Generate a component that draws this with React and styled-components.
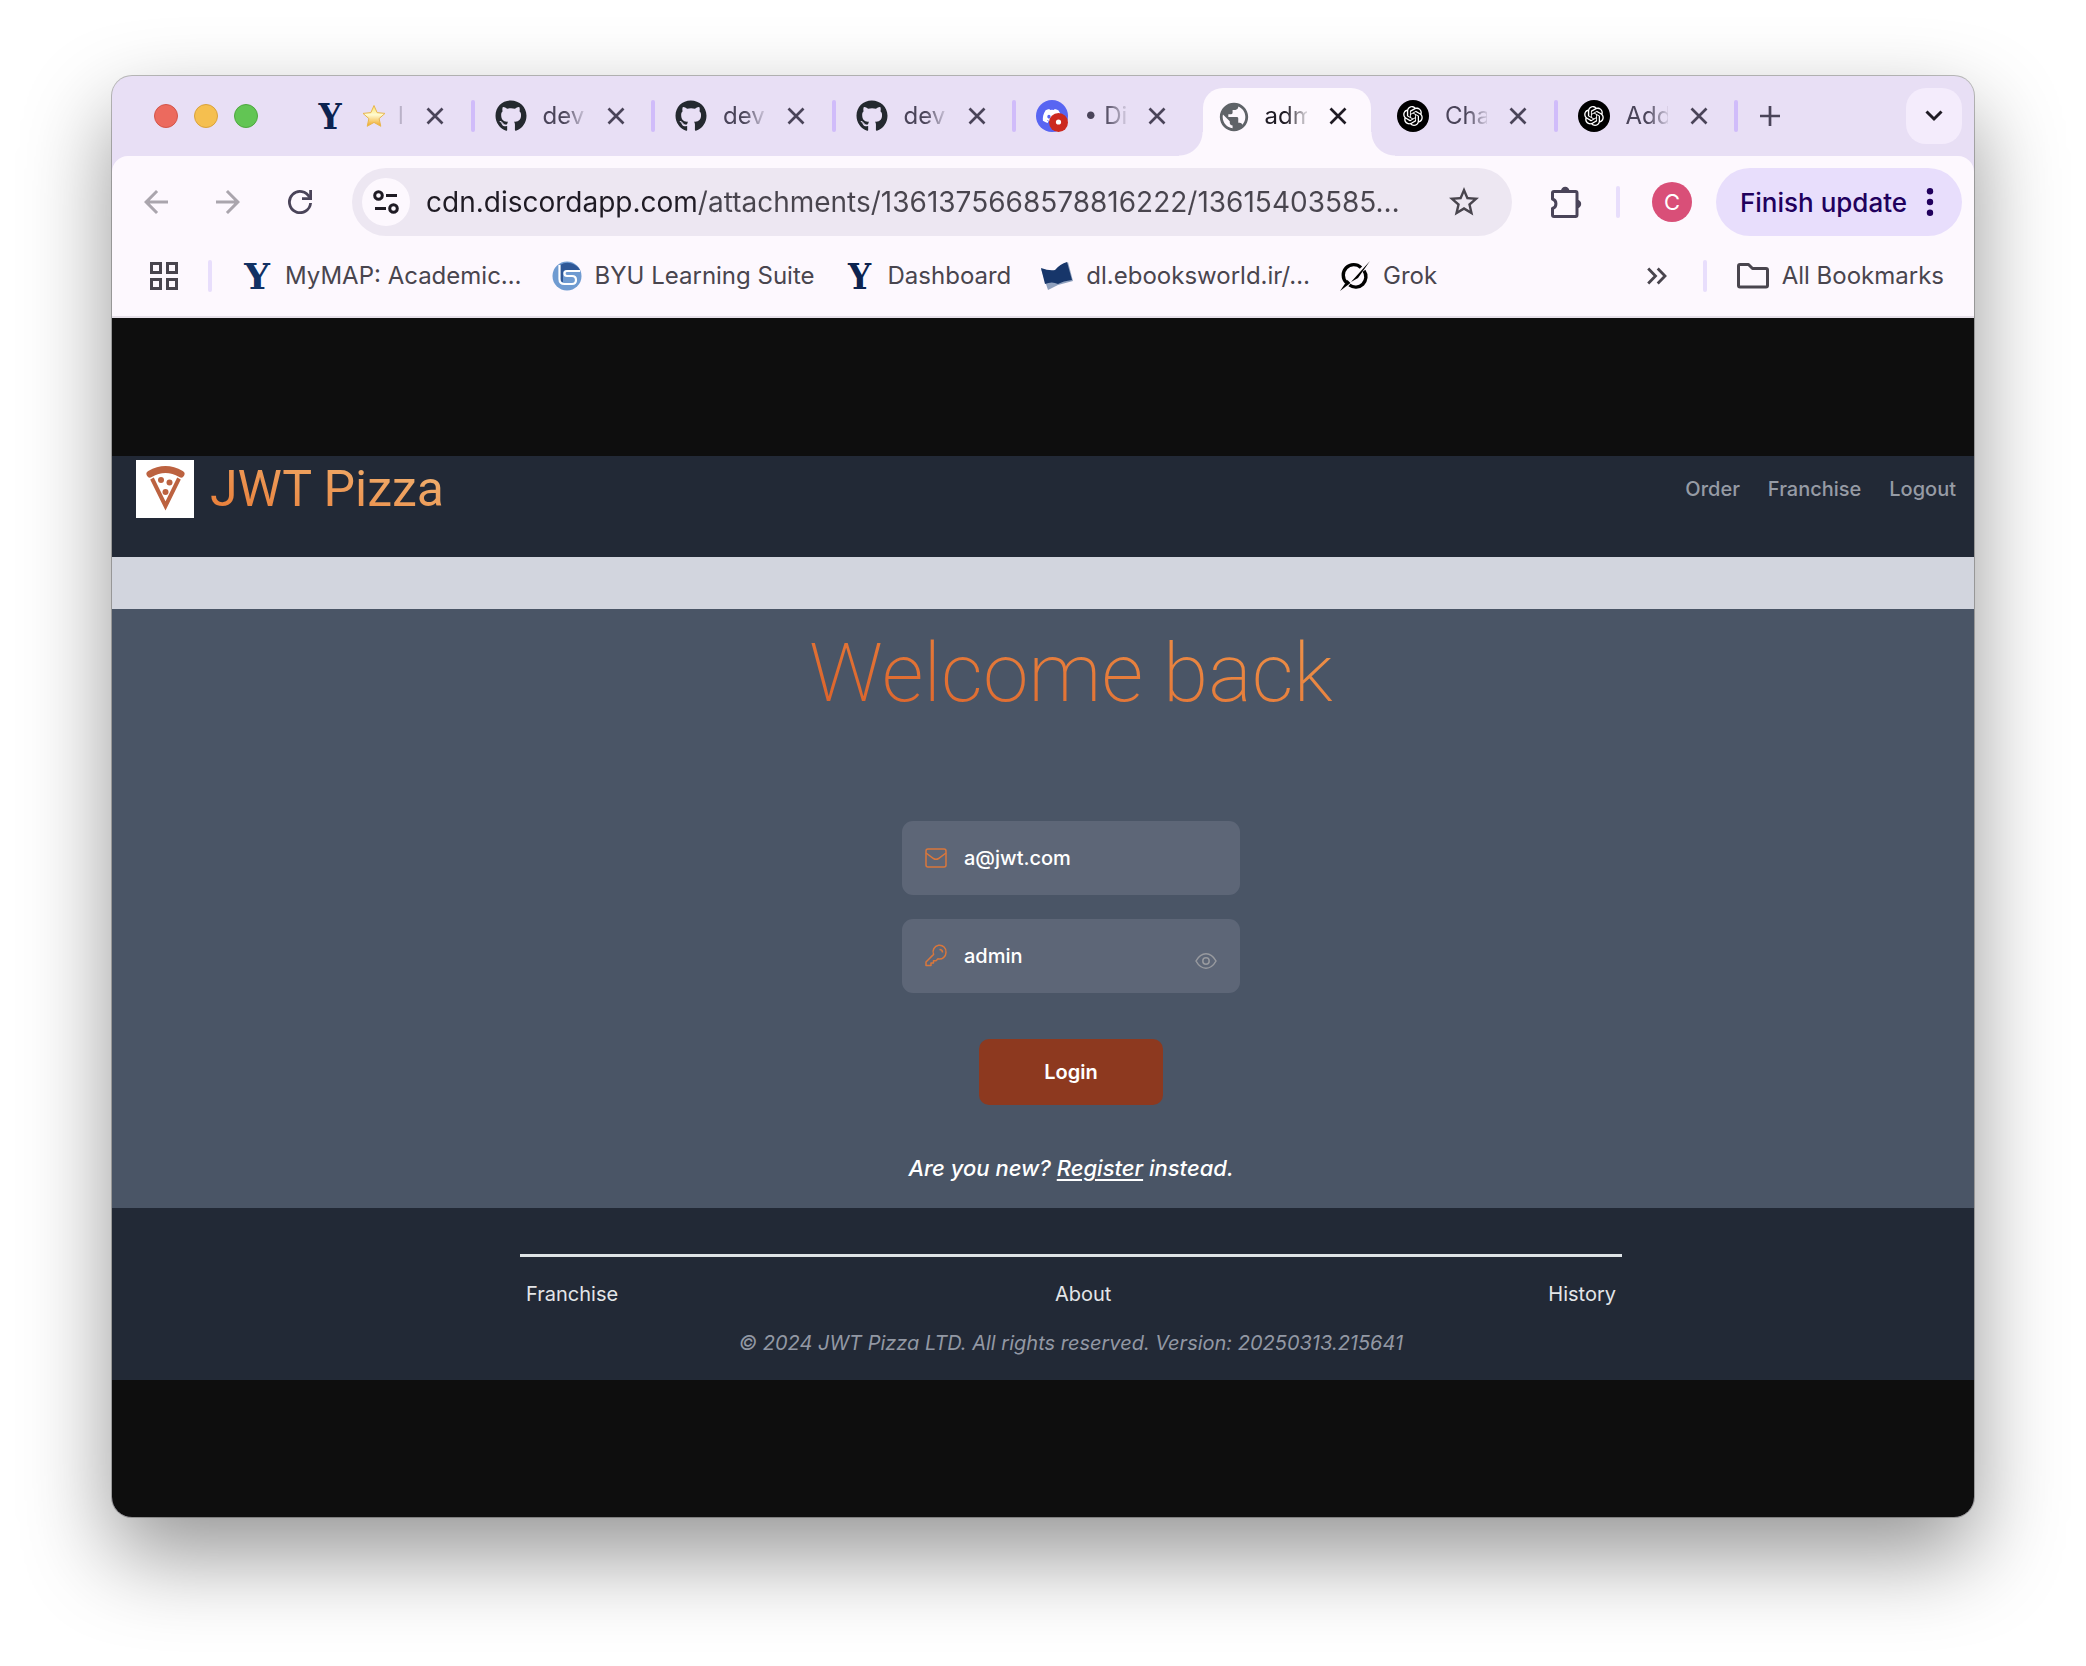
import React from "react";
import styled, { createGlobalStyle, css } from "styled-components";
import { FaDiscord, FaGithub } from "react-icons/fa";
import { RiOpenaiFill } from "react-icons/ri";
import { MdArrowBack, MdArrowForward, MdStarBorder, MdPublic } from "react-icons/md";

const ui = '"Inter", "Liberation Sans", sans-serif';
const display = '"Roboto", "Liberation Sans", sans-serif';

const GlobalStyle = createGlobalStyle`
  *, *::before, *::after { box-sizing: border-box; }
  body { margin: 0; background: #fff; font-family: ${ui}; }
  button, input { font: inherit; color: inherit; border: 0; padding: 0; margin: 0; background: none; }
  button { cursor: pointer; }
  svg { display: block; flex: none; }
`;

const Desktop = styled.div`
  display: flex;
  min-height: 100vh;
  padding: 76px 112px 149px;
`;

const Window = styled.div`
  flex: 1;
  min-width: 0;
  display: flex;
  flex-direction: column;
  overflow: hidden;
  border-radius: 20px;
  background: #e8dff5;
  box-shadow: 0 0 0 1px rgba(0, 0, 0, 0.25), 0 38px 88px rgba(0, 0, 0, 0.42);
`;

/* Tab strip */
const TabStrip = styled.header`
  display: flex;
  align-items: center;
  height: 80px;
  padding: 0 12px 0 42px;
  color: #4a4459;
`;

const Lights = styled.div`
  display: flex;
  gap: 16px;
  width: 140px;
  flex: none;
`;

const Light = styled.button`
  width: 24px;
  height: 24px;
  border-radius: 50%;
  background: ${(p) => p.$fill};
  border: 1px solid ${(p) => p.$edge};
`;

const Tabs = styled.nav`
  flex: 0 1 1444px;
  min-width: 0;
  display: flex;
  align-self: stretch;
`;

const Tab = styled.div`
  position: relative;
  isolation: isolate;
  flex: 1 1 0;
  min-width: 0;
  display: flex;
  align-items: center;
  padding-left: 20px;
  ${(p) =>
    p.$active &&
    css`
      color: #1f1b24;
      &::before {
        content: "";
        position: absolute;
        z-index: -1;
        inset: 12px 6px 0;
        border-radius: 20px 20px 0 0;
        background: #fdf8fe;
      }
    `}
`;

const Flare = styled.span`
  position: absolute;
  bottom: 0;
  width: 24px;
  height: 24px;
  ${(p) => (p.$side === "left" ? "left: -18px;" : "right: -18px;")}
  background: radial-gradient(
    circle at ${(p) => (p.$side === "left" ? "0 0" : "100% 0")},
    transparent 23px,
    #fdf8fe 24px
  );
`;

const TabIcon = styled.span`
  display: grid;
  place-items: center;
  width: 32px;
  height: 32px;
  flex: none;
`;

const TabTitle = styled.span`
  width: 42px;
  margin: 0 15px 0 16px;
  flex: none;
  display: flex;
  align-items: center;
  gap: 12px;
  overflow: hidden;
  white-space: nowrap;
  font-size: 24px;
  line-height: 32px;
  mask-image: linear-gradient(90deg, #000 50%, rgba(0, 0, 0, 0.15));
`;

const IconButton = styled.button`
  display: grid;
  place-items: center;
  flex: none;
  width: ${(p) => p.$size || 32}px;
  height: ${(p) => p.$size || 32}px;
  color: ${(p) => p.$color || "inherit"};
`;

const Divider = styled.span`
  width: 4px;
  height: 32px;
  border-radius: 2px;
  flex: none;
  background: #e8defc;
`;

const TabDivider = styled(Divider)`
  margin-left: auto;
  background: #d0bcfa;
`;

const NewTab = styled(IconButton)`
  margin: 0 auto 0 16px;
`;

const TabSearch = styled(IconButton)`
  border-radius: 20px;
  background: #f4ecfc;
  color: #1f1b24;
`;

/* Toolbar */
const Chrome = styled.div`
  border-radius: 16px 16px 0 0;
  background: #fdf8fe;
  border-bottom: 2px solid #e6e0e9;
`;

const Toolbar = styled.div`
  display: flex;
  align-items: center;
  padding: 12px 12px 0 26px;
  color: #4a4459;
`;

const NavButtons = styled.div`
  display: flex;
  gap: 36px;
  margin-right: 34px;
`;

const Omnibox = styled.form`
  flex: 1;
  min-width: 0;
  display: flex;
  align-items: center;
  height: 68px;
  padding: 0 30px 0 10px;
  border-radius: 34px;
  background: #ede7f2;
  color: #49454e;
`;

const SiteInfo = styled(IconButton)`
  border-radius: 50%;
  background: #fdf8fe;
  color: #1f1b24;
`;

const Address = styled.input`
  flex: 1;
  min-width: 0;
  margin: 0 16px;
  height: 40px;
  font-size: 28px;
  line-height: 40px;
  outline: none;
  background: linear-gradient(90deg, #1f1b24 270px, #49454e 270px);
  background-clip: text;
  color: transparent;
`;

const ToolbarEnd = styled.div`
  display: flex;
  align-items: center;
  gap: 32px;
  margin-left: 36px;
`;

const Account = styled.div`
  display: flex;
  align-items: center;
  gap: 24px;
`;

const Avatar = styled.button`
  width: 40px;
  height: 40px;
  border-radius: 50%;
  background: #d94f78;
  color: #fff;
  font-size: 22px;
  line-height: 40px;
`;

const UpdateButton = styled.button`
  display: flex;
  align-items: center;
  justify-content: space-between;
  width: 246px;
  height: 68px;
  padding: 0 28px 0 24px;
  border-radius: 34px;
  background: #e8defc;
  color: #21005d;
  font-size: 26px;
  font-weight: 500;
  white-space: nowrap;
`;

/* Bookmarks */
const Bookmarks = styled.nav`
  display: flex;
  align-items: center;
  gap: 30px;
  height: 80px;
  padding: 0 30px 0 38px;
  color: #49454e;
  font-size: 24px;
  line-height: 32px;
`;

const BookmarkList = styled.div`
  display: flex;
  align-items: center;
  gap: 30px;
  margin-right: auto;
`;

const Bookmark = styled.a`
  display: flex;
  align-items: center;
  gap: 13px;
  color: inherit;
  text-decoration: none;
  white-space: nowrap;
`;

const LetterMark = styled.span`
  display: grid;
  place-items: center;
  width: 30px;
  height: 32px;
  color: ${(p) => p.$color || "#0c2350"};
  font-family: ${(p) => (p.$slim ? '"DejaVu Serif Condensed", ' : "")}"DejaVu Serif", serif;
  font-weight: 700;
  font-size: 36px;
  line-height: 32px;
`;

/* Page */
const Viewport = styled.main`
  flex: 1;
  padding: 138px 0 137px;
  background: #0e0e0e;
  display: flex;
  flex-direction: column;
`;

const SiteHeader = styled.header`
  display: flex;
  justify-content: space-between;
  height: 101px;
  padding: 4px 18px 0 24px;
  background: #222936;
`;

const Brand = styled.a`
  display: flex;
  align-items: center;
  gap: 16px;
  height: 58px;
  text-decoration: none;
`;

const BrandName = styled.span`
  font-family: ${display};
  font-size: 50px;
  line-height: 60px;
  white-space: nowrap;
  background: linear-gradient(15deg, #e97f3a 10%, #f1b271 90%);
  background-clip: text;
  color: transparent;
`;

const SiteNav = styled.nav`
  display: flex;
  gap: 28px;
  font-size: 20px;
  font-weight: 500;
  line-height: 58px;
  color: #969ba5;
`;

const PlainLink = styled.a`
  color: inherit;
  text-decoration: none;
`;

const Banner = styled.div`
  height: 52px;
  background: #d2d5de;
`;

const Login = styled.section`
  flex: 1;
  display: flex;
  flex-direction: column;
  align-items: center;
  padding: 14px 0 20px 56px;
  background: #4a5566;
`;

const Heading = styled.h1`
  margin: 0 0 98px;
  font-family: ${display};
  font-size: 82px;
  font-weight: 200;
  line-height: 100px;
  white-space: nowrap;
  background: linear-gradient(15deg, #dc632b 10%, #ee9148 90%);
  background-clip: text;
  color: transparent;
`;

const LoginForm = styled.form`
  display: flex;
  flex-direction: column;
  align-items: center;
  gap: 24px;
`;

const Field = styled.label`
  display: flex;
  align-items: center;
  gap: 16px;
  width: 338px;
  height: 74px;
  padding: 0 22px;
  border-radius: 11px;
  background: #5d6677;
  color: #d9773c;
`;

const FieldInput = styled.input`
  flex: 1;
  min-width: 0;
  height: 32px;
  outline: none;
  color: #fff;
  font-size: 20px;
  font-weight: 500;
`;

const Reveal = styled(IconButton)`
  align-self: flex-end;
  margin-bottom: 20px;
`;

const SubmitButton = styled.button`
  width: 184px;
  height: 66px;
  margin: 22px 0 47px;
  border-radius: 10px;
  background: #8d391f;
  color: #fff;
  font-size: 20px;
  font-weight: 600;
`;

const Invite = styled.p`
  margin: 0;
  color: #fff;
  font-size: 22px;
  font-style: italic;
  font-weight: 500;
  line-height: 32px;
  a { color: inherit; text-underline-offset: 3px; }
`;

const SiteFooter = styled.footer`
  height: 172px;
  padding: 46px 352px 0 408px;
  background: #222936;
  color: #e3e5e8;
`;

const FooterLinks = styled.nav`
  display: flex;
  justify-content: space-between;
  padding: 21px 6px 0;
  border-top: 3px solid #dfe3e6;
  font-size: 20px;
  line-height: 32px;
`;

const Copyright = styled.p`
  margin: 17px 0 0;
  text-align: center;
  white-space: nowrap;
  color: #9298a4;
  font-size: 20px;
  font-style: italic;
  line-height: 32px;
`;

/* Drawings */
const stroke = { fill: "none", stroke: "currentColor" };

const CloseIcon = () => (
  <svg width="18" height="18" viewBox="0 0 18 18" {...stroke} strokeWidth="2.700">
    <path d="M1.500 1.500l15 15M16.500 1.500l-15 15" />
  </svg>
);
const PlusIcon = () => (
  <svg width="20" height="20" viewBox="0 0 20 20" {...stroke} strokeWidth="2.700">
    <path d="M10 0v20M0 10h20" />
  </svg>
);
const ChevronIcon = () => (
  <svg width="18" height="12" viewBox="0 0 18 12" {...stroke} strokeWidth="3">
    <path d="M1.500 1.500L9 9l7.500-7.500" />
  </svg>
);
const ReloadIcon = () => (
  <svg width="24" height="24" viewBox="0 0 24 24" {...stroke} strokeWidth="2.800">
    <path d="M21.600 7.500A10.600 10.600 0 1 0 22.600 13" />
    <path d="M22.600 0v8.600h-8.600" />
  </svg>
);
const TuneIcon = () => (
  <svg width="26" height="24" viewBox="0 0 26 24" {...stroke} strokeWidth="3">
    <circle cx="5.500" cy="5.500" r="3.800" />
    <path d="M13 5.500h11M2 18.500h11" />
    <circle cx="20.500" cy="18.500" r="3.800" />
  </svg>
);
const PuzzleIcon = () => (
  <svg width="34" height="34" viewBox="0 0 34 34">
    <path
      {...stroke}
      strokeWidth="3"
      strokeLinejoin="round"
      d="M5 6.500h21.500q1.500 0 1.500 1.500v22q0 1.500-1.500 1.500H5q-1.500 0-1.500-1.500v-6.500a5 5 0 0 0 0-9.500V8q0-1.500 1.500-1.500z"
    />
    <path fill="currentColor" d="M12 6a4.200 4.200 0 0 1 8.400 0zM28 14.800a4.200 4.200 0 0 1 0 8.400z" />
  </svg>
);
const DotsIcon = () => (
  <svg width="8" height="28" viewBox="0 0 8 28" fill="currentColor">
    <circle cx="4" cy="3.200" r="3.200" />
    <circle cx="4" cy="14" r="3.200" />
    <circle cx="4" cy="24.800" r="3.200" />
  </svg>
);
const AppsIcon = () => (
  <svg width="28" height="28" viewBox="0 0 28 28" {...stroke} strokeWidth="3">
    <path d="M1.500 1.500h9v9h-9zM17.500 1.500h9v9h-9zM1.500 17.500h9v9h-9zM17.500 17.500h9v9h-9z" />
  </svg>
);
const MoreIcon = () => (
  <svg width="20" height="18" viewBox="0 0 20 18" {...stroke} strokeWidth="2.800">
    <path d="M1.200 1.500L8.500 9l-7.300 7.500M10.700 1.500L18 9l-7.300 7.500" />
  </svg>
);
const FolderIcon = () => (
  <svg width="32" height="26" viewBox="0 0 32 26" {...stroke} strokeWidth="3" strokeLinejoin="round">
    <path d="M3 1.500h8.500l4 4H29q1.500 0 1.500 1.500v15.500q0 1.500-1.500 1.500H3q-1.500 0-1.500-1.500V3q0-1.500 1.500-1.500z" />
  </svg>
);
const GoldStar = () => (
  <svg width="24" height="24" viewBox="0 0 24 24">
    <defs>
      <linearGradient id="gold" x1="0" y1="0" x2="0" y2="1">
        <stop offset="0" stopColor="#fbe267" />
        <stop offset=".45" stopColor="#fffbd0" />
        <stop offset="1" stopColor="#f0a51e" />
      </linearGradient>
    </defs>
    <path
      d="M12 1.500l3.100 7.100 7.900.8-5.900 5.200 1.700 7.700-6.800-3.900-6.800 3.900 1.700-7.700L1 9.400l7.900-.8z"
      fill="url(#gold)"
      stroke="#e7b54e"
      strokeLinejoin="round"
    />
  </svg>
);
const DiscordIcon = () => (
  <svg width="32" height="32" viewBox="0 0 32 32">
    <circle cx="16" cy="16" r="16" fill="#5865f2" />
    <FaDiscord x="6" y="6" size={20} color="#fff" />
    <circle cx="22.500" cy="22.500" r="9.500" fill="#cc291f" />
    <circle cx="22.500" cy="22" r="2.600" fill="#fff" />
  </svg>
);
const OpenAiIcon = () => (
  <svg width="32" height="32" viewBox="0 0 32 32">
    <circle cx="16" cy="16" r="16" fill="#000" />
    <RiOpenaiFill x="4" y="4" size={24} color="#fff" />
  </svg>
);
const SuiteIcon = () => (
  <svg width="30" height="30" viewBox="0 0 30 30">
    <circle cx="15" cy="15" r="14.500" fill="#6f9bd1" />
    <path d="M8 4A14.500 14.500 0 0 1 28 9H14q-3 0-3 3v9H8z" fill="#2f5796" />
    <g fill="none" stroke="#fff" strokeWidth="2.200">
      <path d="M7.500 4v14q0 5 5 5H20q4 0 4-4t-4-4h-5q-2.500 0-2.500-2.500T15 10h13" />
    </g>
  </svg>
);
const BookIcon = () => (
  <svg width="32" height="30" viewBox="0 0 32 30">
    <path d="M0 8l15 3L27 1l5 19-15 4L7 29z" fill="#8fa0bd" />
    <path d="M0 7q8 3 14 2 5-6 12-8l5 18q-9 1-14 4-6-3-13 0z" fill="#17366a" />
  </svg>
);
const GrokIcon = () => (
  <svg width="30" height="30" viewBox="0 0 30 30">
    <g fill="none" stroke="#000" strokeWidth="3.400">
      <path d="M6.400 21.500A10.300 10.300 0 0 1 21 6.600" />
      <path d="M24 9.800A10.300 10.300 0 0 1 9.400 24" />
    </g>
    <path d="M30 0L18 17l-7 4 9-10zM0 30l7.500-11 3 3z" fill="#000" />
  </svg>
);
const PizzaLogo = () => (
  <svg width="58" height="58" viewBox="0 0 58 58">
    <rect width="58" height="58" fill="#fff" />
    <g fill="none" stroke="#bc6240">
      <path d="M14 14q15.500-9 31 0" strokeWidth="7" strokeLinecap="round" />
      <path d="M16 18.500L29.500 46 43 18.500" strokeWidth="4" />
    </g>
    <g fill="#bc6240">
      <circle cx="25" cy="20" r="3" />
      <circle cx="33.500" cy="22.500" r="3" />
      <circle cx="29.500" cy="32" r="3" />
    </g>
  </svg>
);
const MailIcon = () => (
  <svg width="24" height="24" viewBox="0 0 24 24" {...stroke} strokeWidth="1.500">
    <rect x="2" y="3" width="20" height="18" rx="2" />
    <path d="M2 7l7.500 5.500q2.500 1.500 5 0L22 7" />
  </svg>
);
const KeyIcon = () => (
  <svg width="24" height="24" viewBox="0 0 24 24" {...stroke} strokeWidth="1.500" strokeLinejoin="round">
    <path d="M22 8.500a6.500 6.500 0 0 1-8 6.300l-2 2H9.500V19H7v2.500H2V18l7.600-7.600A6.500 6.500 0 1 1 22 8.500z" />
    <path d="M15.500 5.500q3 0 3 3" />
  </svg>
);
const EyeIcon = () => (
  <svg width="22" height="18" viewBox="0 0 22 18" {...stroke} strokeWidth="1.500">
    <path d="M1 9q4-7.200 10-7.200T21 9q-4 7.200-10 7.200T1 9z" />
    <circle cx="11" cy="9" r="3.200" />
  </svg>
);

const openTabs = [
  {
    name: "Y",
    icon: <LetterMark $slim>Y</LetterMark>,
    title: (
      <>
        <GoldStar />l
      </>
    ),
    divider: true,
  },
  { name: "dev", icon: <FaGithub size={32} color="#24292f" />, title: "dev", divider: true },
  { name: "dev", icon: <FaGithub size={32} color="#24292f" />, title: "dev", divider: true },
  { name: "dev", icon: <FaGithub size={32} color="#24292f" />, title: "dev", divider: true },
  { name: "Discord", icon: <DiscordIcon />, title: "• Di" },
  { name: "admin", icon: <MdPublic size={34} color="#5f6368" />, title: "adm", active: true },
  { name: "Chat", icon: <OpenAiIcon />, title: "Cha", divider: true },
  { name: "Add", icon: <OpenAiIcon />, title: "Add", divider: true },
];

const bookmarks = [
  { icon: <LetterMark $color="#123163">Y</LetterMark>, text: "MyMAP: Academic…" },
  { icon: <SuiteIcon />, text: "BYU Learning Suite" },
  { icon: <LetterMark $slim>Y</LetterMark>, text: "Dashboard" },
  { icon: <BookIcon />, text: "dl.ebooksworld.ir/…" },
  { icon: <GrokIcon />, text: "Grok" },
];

const lights = [
  ["Close window", "#ec6a5e", "#d35549"],
  ["Minimize window", "#f5bf4f", "#d9a23b"],
  ["Zoom window", "#62c554", "#4ea73f"],
];

export default function App() {
  return (
    <>
      <GlobalStyle />
      <Desktop>
        <Window>
          <TabStrip>
            <Lights>
              {lights.map(([name, fill, edge]) => (
                <Light key={name} aria-label={name} $fill={fill} $edge={edge} />
              ))}
            </Lights>
            <Tabs aria-label="Tabs">
              {openTabs.map((tab, i) => (
                <Tab key={i} $active={tab.active}>
                  {tab.active && <Flare $side="left" />}
                  {tab.active && <Flare $side="right" />}
                  <TabIcon>{tab.icon}</TabIcon>
                  <TabTitle>{tab.title}</TabTitle>
                  <IconButton aria-label={`Close ${tab.name}`}>
                    <CloseIcon />
                  </IconButton>
                  {tab.divider && <TabDivider />}
                </Tab>
              ))}
            </Tabs>
            <NewTab aria-label="New tab">
              <PlusIcon />
            </NewTab>
            <TabSearch aria-label="Search tabs" $size={56}>
              <ChevronIcon />
            </TabSearch>
          </TabStrip>

          <Chrome>
            <Toolbar>
              <NavButtons>
                <IconButton aria-label="Back" $size={36} $color="#aaa5ad">
                  <MdArrowBack size={36} />
                </IconButton>
                <IconButton aria-label="Forward" $size={36} $color="#aaa5ad">
                  <MdArrowForward size={36} />
                </IconButton>
                <IconButton aria-label="Reload" $size={36}>
                  <ReloadIcon />
                </IconButton>
              </NavButtons>
              <Omnibox onSubmit={(e) => e.preventDefault()}>
                <SiteInfo type="button" aria-label="Site information" $size={48}>
                  <TuneIcon />
                </SiteInfo>
                <Address
                  aria-label="Address"
                  defaultValue="cdn.discordapp.com/attachments/1361375668578816222/13615403585…"
                />
                <IconButton type="button" aria-label="Bookmark this page" $size={36}>
                  <MdStarBorder size={36} />
                </IconButton>
              </Omnibox>
              <ToolbarEnd>
                <IconButton aria-label="Extensions" $size={36}>
                  <PuzzleIcon />
                </IconButton>
                <Divider />
                <Account>
                  <Avatar aria-label="Profile C">C</Avatar>
                  <UpdateButton>
                    Finish update
                    <DotsIcon />
                  </UpdateButton>
                </Account>
              </ToolbarEnd>
            </Toolbar>

            <Bookmarks aria-label="Bookmarks">
              <IconButton aria-label="Apps" $size={28}>
                <AppsIcon />
              </IconButton>
              <Divider />
              <BookmarkList>
                {bookmarks.map((b) => (
                  <Bookmark key={b.text} href="#">
                    {b.icon}
                    {b.text}
                  </Bookmark>
                ))}
              </BookmarkList>
              <IconButton aria-label="More bookmarks">
                <MoreIcon />
              </IconButton>
              <Divider />
              <Bookmark href="#">
                <FolderIcon />
                All Bookmarks
              </Bookmark>
            </Bookmarks>
          </Chrome>

          <Viewport>
            <SiteHeader>
              <Brand href="#">
                <PizzaLogo />
                <BrandName>JWT Pizza</BrandName>
              </Brand>
              <SiteNav aria-label="Site">
                <PlainLink href="#">Order</PlainLink>
                <PlainLink href="#">Franchise</PlainLink>
                <PlainLink href="#">Logout</PlainLink>
              </SiteNav>
            </SiteHeader>
            <Banner />
            <Login>
              <Heading>Welcome back</Heading>
              <LoginForm onSubmit={(e) => e.preventDefault()}>
                <Field>
                  <MailIcon />
                  <FieldInput type="email" aria-label="Email" defaultValue="a@jwt.com" />
                </Field>
                <Field>
                  <KeyIcon />
                  <FieldInput type="text" aria-label="Password" defaultValue="admin" />
                  <Reveal type="button" aria-label="Hide password" $size={24} $color="#989a9f">
                    <EyeIcon />
                  </Reveal>
                </Field>
                <SubmitButton type="submit">Login</SubmitButton>
              </LoginForm>
              <Invite>
                Are you new? <a href="#">Register</a> instead.
              </Invite>
            </Login>
            <SiteFooter>
              <FooterLinks aria-label="Footer">
                <PlainLink href="#">Franchise</PlainLink>
                <PlainLink href="#">About</PlainLink>
                <PlainLink href="#">History</PlainLink>
              </FooterLinks>
              <Copyright>© 2024 JWT Pizza LTD. All rights reserved. Version: 20250313.215641</Copyright>
            </SiteFooter>
          </Viewport>
        </Window>
      </Desktop>
    </>
  );
}
